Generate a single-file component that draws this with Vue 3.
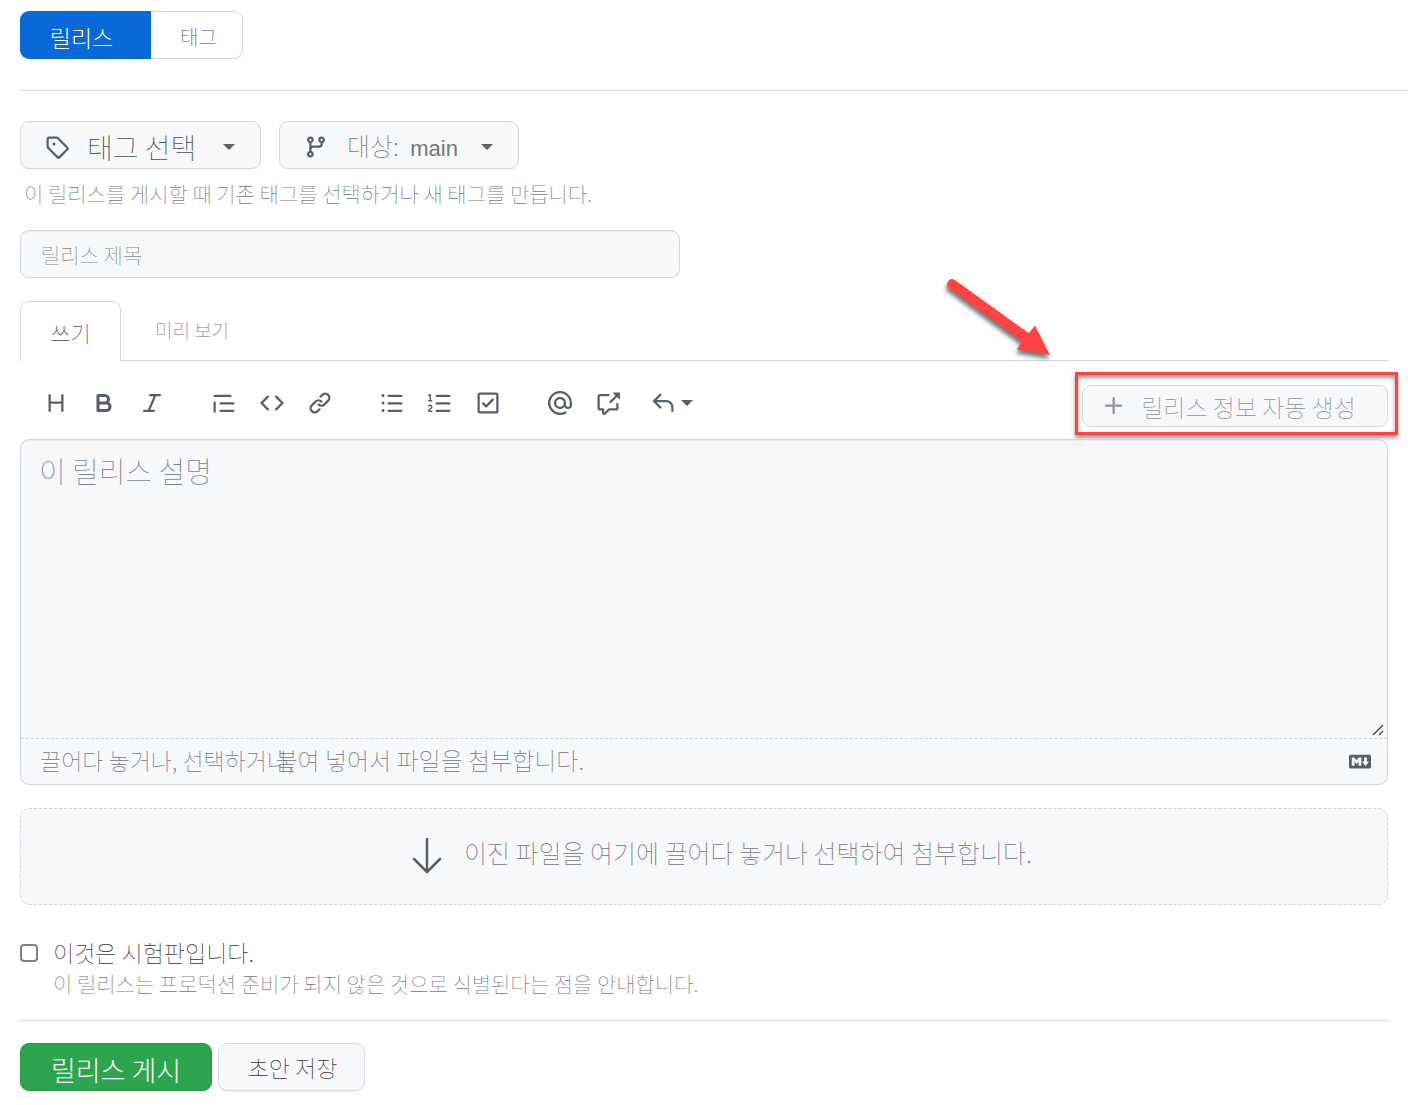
<script setup>
import { ref } from 'vue'

const title = ref('')
const notes = ref('')
const prerelease = ref(false)

const icons = {
  tag: 'M1 7.775V2.75C1 1.784 1.784 1 2.75 1h5.025c.464 0 .91.184 1.238.513l6.25 6.25a1.75 1.75 0 0 1 0 2.474l-5.026 5.026a1.75 1.75 0 0 1-2.474 0l-6.25-6.25A1.752 1.752 0 0 1 1 7.775Zm1.5 0c0 .066.026.13.073.177l6.25 6.25a.25.25 0 0 0 .354 0l5.025-5.025a.25.25 0 0 0 0-.354l-6.25-6.25a.25.25 0 0 0-.177-.073H2.75a.25.25 0 0 0-.25.25ZM6 5a1 1 0 1 1 0 2 1 1 0 0 1 0-2Z',
  branch: 'M9.5 3.25a2.25 2.25 0 1 1 3 2.122V6A2.5 2.5 0 0 1 10 8.5H6a1 1 0 0 0-1 1v1.128a2.251 2.251 0 1 1-1.5 0V5.372a2.25 2.25 0 1 1 1.5 0v1.836A2.493 2.493 0 0 1 6 7h4a1 1 0 0 0 1-1v-.628A2.25 2.25 0 0 1 9.5 3.25Zm-6 0a.75.75 0 1 0 1.5 0 .75.75 0 0 0-1.5 0Zm8.25-.75a.75.75 0 1 0 0 1.5.75.75 0 0 0 0-1.5ZM4.25 12a.75.75 0 1 0 0 1.5.75.75 0 0 0 0-1.5Z',
  plus: 'M7.75 2a.75.75 0 0 1 .75.75V7h4.25a.75.75 0 0 1 0 1.5H8.5v4.25a.75.75 0 0 1-1.5 0V8.5H2.75a.75.75 0 0 1 0-1.5H7V2.75A.75.75 0 0 1 7.75 2Z',
  reply: 'M6.78 1.97a.75.75 0 0 1 0 1.06L3.81 6h6.44A4.75 4.75 0 0 1 15 10.75v2.5a.75.75 0 0 1-1.5 0v-2.5a3.25 3.25 0 0 0-3.25-3.25H3.81l2.97 2.97a.749.749 0 0 1-.326 1.275.749.749 0 0 1-.734-.215L1.47 7.28a.75.75 0 0 1 0-1.06l4.25-4.25a.75.75 0 0 1 1.06 0Z',
  markdown: 'M14.85 3H1.15C.52 3 0 3.52 0 4.15v7.69C0 12.48.52 13 1.15 13h13.69c.64 0 1.15-.52 1.15-1.15v-7.7C16 3.52 15.48 3 14.85 3zM9 11H7V8L5.5 9.92 4 8v3H2V5h2l1.5 2L7 5h2v6zm2.99.5L9.5 8H11V5h2v3h1.5l-2.51 3.5z'
}

const tools = [
  [
    { name: 'heading', path: 'M3.75 2a.75.75 0 0 1 .75.75V7h7V2.75a.75.75 0 0 1 1.5 0v10.5a.75.75 0 0 1-1.5 0V8.5h-7v4.75a.75.75 0 0 1-1.5 0V2.75A.75.75 0 0 1 3.75 2Z' },
    { name: 'bold', path: 'M4 2h4.5a3.501 3.501 0 0 1 2.852 5.53A3.499 3.499 0 0 1 9.5 14H4a1 1 0 0 1-1-1V3a1 1 0 0 1 1-1Zm1 7v3h4.5a1.5 1.5 0 0 0 0-3Zm3.5-2a1.5 1.5 0 0 0 0-3H5v3Z' },
    { name: 'italic', path: 'M6 2.75A.75.75 0 0 1 6.75 2h6.5a.75.75 0 0 1 0 1.5h-2.505l-3.858 9H9.25a.75.75 0 0 1 0 1.5h-6.5a.75.75 0 0 1 0-1.5h2.505l3.858-9H6.75A.75.75 0 0 1 6 2.75Z' }
  ],
  [
    { name: 'quote', path: 'M1.75 2.5h10.5a.75.75 0 0 1 0 1.5H1.75a.75.75 0 0 1 0-1.5Zm4 5h8.5a.75.75 0 0 1 0 1.5h-8.5a.75.75 0 0 1 0-1.5Zm0 5h8.5a.75.75 0 0 1 0 1.5h-8.5a.75.75 0 0 1 0-1.5ZM2.5 7.75v6a.75.75 0 0 1-1.5 0v-6a.75.75 0 0 1 1.5 0Z' },
    { name: 'code', path: 'm11.28 3.22 4.25 4.25a.75.75 0 0 1 0 1.06l-4.25 4.25a.749.749 0 0 1-1.275-.326.749.749 0 0 1 .215-.734L13.94 8l-3.72-3.72a.749.749 0 0 1 .326-1.275.749.749 0 0 1 .734.215Zm-6.56 0a.751.751 0 0 1 1.042.018.751.751 0 0 1 .018 1.042L2.06 8l3.72 3.72a.749.749 0 0 1-.326 1.275.749.749 0 0 1-.734-.215L.47 8.53a.75.75 0 0 1 0-1.06Z' },
    { name: 'link', path: 'm7.775 3.275 1.25-1.25a3.5 3.5 0 1 1 4.95 4.95l-2.5 2.5a3.5 3.5 0 0 1-4.95 0 .751.751 0 0 1 .018-1.042.751.751 0 0 1 1.042-.018 1.998 1.998 0 0 0 2.83 0l2.5-2.5a2.002 2.002 0 0 0-2.83-2.83l-1.25 1.25a.751.751 0 0 1-1.042-.018.751.751 0 0 1-.018-1.042Zm-4.69 9.64a1.998 1.998 0 0 0 2.83 0l1.25-1.25a.751.751 0 0 1 1.042.018.751.751 0 0 1 .018 1.042l-1.25 1.25a3.5 3.5 0 1 1-4.95-4.95l2.5-2.5a3.5 3.5 0 0 1 4.95 0 .751.751 0 0 1-.018 1.042.751.751 0 0 1-1.042.018 1.998 1.998 0 0 0-2.83 0l-2.5 2.5a1.998 1.998 0 0 0 0 2.83Z' }
  ],
  [
    { name: 'bulleted list', path: 'M5.75 2.5h8.5a.75.75 0 0 1 0 1.5h-8.5a.75.75 0 0 1 0-1.5Zm0 5h8.5a.75.75 0 0 1 0 1.5h-8.5a.75.75 0 0 1 0-1.5Zm0 5h8.5a.75.75 0 0 1 0 1.5h-8.5a.75.75 0 0 1 0-1.5ZM2 14a1 1 0 1 1 0-2 1 1 0 0 1 0 2Zm1-6a1 1 0 1 1-2 0 1 1 0 0 1 2 0ZM2 4a1 1 0 1 1 0-2 1 1 0 0 1 0 2Z' },
    { name: 'numbered list', path: 'M5 3.25a.75.75 0 0 1 .75-.75h8.5a.75.75 0 0 1 0 1.5h-8.5A.75.75 0 0 1 5 3.25Zm0 5a.75.75 0 0 1 .75-.75h8.5a.75.75 0 0 1 0 1.5h-8.5A.75.75 0 0 1 5 8.25Zm0 5a.75.75 0 0 1 .75-.75h8.5a.75.75 0 0 1 0 1.5h-8.5a.75.75 0 0 1-.75-.75ZM.924 10.32a.5.5 0 0 1-.851-.525l.001-.001.001-.002.002-.004.007-.011c.097-.144.215-.273.348-.384.228-.19.588-.392 1.068-.392.468 0 .858.181 1.126.484.259.294.377.673.377 1.038 0 .987-.686 1.495-1.156 1.845l-.047.035c-.303.225-.522.4-.654.597h1.357a.5.5 0 0 1 0 1H.5a.5.5 0 0 1-.5-.5c0-1.005.692-1.52 1.167-1.875l.035-.025c.531-.396.8-.625.8-1.078a.57.57 0 0 0-.128-.376C1.806 10.068 1.695 10 1.5 10a.658.658 0 0 0-.429.163.835.835 0 0 0-.144.153ZM2.003 2.5V6h.503a.5.5 0 0 1 0 1H.5a.5.5 0 0 1 0-1h.503V3.308l-.28.14a.5.5 0 0 1-.446-.895l1.003-.5a.5.5 0 0 1 .723.447Z' },
    { name: 'task list', path: 'M2.5 2.75a.25.25 0 0 1 .25-.25h10.5a.25.25 0 0 1 .25.25v10.5a.25.25 0 0 1-.25.25H2.75a.25.25 0 0 1-.25-.25V2.75ZM2.75 1A1.75 1.75 0 0 0 1 2.75v10.5c0 .966.784 1.75 1.75 1.75h10.5A1.75 1.75 0 0 0 15 13.25V2.75A1.75 1.75 0 0 0 13.25 1H2.75Zm9.03 5.28a.75.75 0 0 0-1.06-1.06L6.75 9.19 5.28 7.72a.75.75 0 0 0-1.06 1.06l2 2a.75.75 0 0 0 1.06 0l4.5-4.5Z' }
  ],
  [
    { name: 'mention', path: 'M4.75 2.37a6.501 6.501 0 0 0 6.5 11.26.75.75 0 0 1 .75 1.298A7.999 7.999 0 0 1 .989 4.148 8 8 0 0 1 16 7.75v1.5a2.75 2.75 0 0 1-5.072 1.475 3.999 3.999 0 0 1-6.65-4.19A4 4 0 0 1 12 8v1.25a1.25 1.25 0 0 0 2.5 0V7.867a6.5 6.5 0 0 0-9.75-5.496ZM10.5 8a2.5 2.5 0 1 0-5 0 2.5 2.5 0 0 0 5 0Z' },
    { name: 'reference', path: 'M2.75 3.5a.25.25 0 0 0-.25.25v7.5c0 .138.112.25.25.25h2a.75.75 0 0 1 .75.75v2.19l2.72-2.72a.749.749 0 0 1 .53-.22h4.5a.25.25 0 0 0 .25-.25v-2.5a.75.75 0 0 1 1.5 0v2.5A1.75 1.75 0 0 1 13.25 13H9.06l-2.573 2.573A1.458 1.458 0 0 1 4 14.543V13H2.75A1.75 1.75 0 0 1 1 11.25v-7.5C1 2.784 1.784 2 2.75 2h5.5a.75.75 0 0 1 0 1.5ZM16 1.25v4.146a.25.25 0 0 1-.427.177L14.03 4.03l-3.75 3.75a.749.749 0 0 1-1.275-.326.749.749 0 0 1 .215-.734l3.75-3.75-1.543-1.543A.25.25 0 0 1 11.604 1h4.146a.25.25 0 0 1 .25.25Z' }
  ]
]
</script>

<template>
  <main class="page">
    <nav class="switch">
      <a href="#releases" class="switch-item active">릴리스</a>
      <a href="#tags" class="switch-item">태그</a>
    </nav>
    <hr class="rule wide">

    <div class="pickers">
      <button type="button" class="btn picker tag-picker">
        <svg class="icon" viewBox="0 0 16 16"><path :d="icons.tag" /></svg>
        <span class="picker-label">태그 선택</span>
        <svg class="caret" viewBox="0 0 12 6"><path d="M0 0h12L6 6z" /></svg>
      </button>
      <button type="button" class="btn picker target-picker">
        <svg class="icon" viewBox="0 0 16 16"><path :d="icons.branch" /></svg>
        <span class="picker-label">대상: <span class="branch">main</span></span>
        <svg class="caret" viewBox="0 0 12 6"><path d="M0 0h12L6 6z" /></svg>
      </button>
    </div>
    <p class="hint">이 릴리스를 게시할 때 기존 태그를 선택하거나 새 태그를 만듭니다.</p>

    <input v-model="title" class="title" type="text" placeholder="릴리스 제목" aria-label="릴리스 제목">

    <div class="tabs" role="tablist">
      <button type="button" role="tab" class="tab selected" aria-selected="true">쓰기</button>
      <button type="button" role="tab" class="tab" aria-selected="false">미리 보기</button>
    </div>

    <div class="toolbar">
      <div class="tools">
        <div v-for="(group, i) in tools" :key="i" class="group">
          <button v-for="tool in group" :key="tool.name" type="button" class="tool" :aria-label="tool.name">
            <svg class="icon" viewBox="0 0 16 16"><path :d="tool.path" /></svg>
          </button>
        </div>
        <button type="button" class="tool reply" aria-label="saved replies">
          <svg class="icon" viewBox="0 0 16 16"><path :d="icons.reply" /></svg>
          <svg class="caret" viewBox="0 0 12 6"><path d="M0 0h12L6 6z" /></svg>
        </button>
      </div>
      <div class="generate-wrap">
        <button type="button" class="btn generate">
          <svg class="icon" viewBox="0 0 16 16"><path :d="icons.plus" /></svg>
          <span>릴리스 정보 자동 생성</span>
        </button>
        <div class="callout"></div>
        <svg class="pointer" viewBox="0 0 120 100" aria-hidden="true">
          <path d="M14.500 9.800 L89 63.300 L95 55.500 L110 85 L77 79.500 L82 71.500 L8.900 18 A5 5 0 0 1 14.500 9.800Z" />
        </svg>
      </div>
    </div>

    <div class="editor">
      <textarea v-model="notes" class="notes" placeholder="이 릴리스 설명" aria-label="이 릴리스 설명"></textarea>
      <svg class="grip" viewBox="0 0 12 12" aria-hidden="true"><path d="M1 11 11 1M7 11l4-4" /></svg>
      <div class="attach">
        <p class="attach-text"><span>끌어다 놓거나, 선택하거나,</span><span class="paste">붙여 넣어서 파일을 첨부합니다.</span></p>
        <svg class="markdown" viewBox="0 3 16 10"><path :d="icons.markdown" /></svg>
      </div>
    </div>

    <div class="drop">
      <svg class="arrow-down" viewBox="0 0 30 36"><path d="M15 1v33M2 21l13 13 13-13" /></svg>
      <span class="drop-text">이진 파일을 여기에 끌어다 놓거나 선택하여 첨부합니다.</span>
    </div>

    <div class="prerelease">
      <input id="prerelease" v-model="prerelease" class="check" type="checkbox">
      <div>
        <label for="prerelease" class="check-label">이것은 시험판입니다.</label>
        <p class="check-note">이 릴리스는 프로덕션 준비가 되지 않은 것으로 식별된다는 점을 안내합니다.</p>
      </div>
    </div>

    <hr class="rule">

    <div class="actions">
      <button type="button" class="btn publish">릴리스 게시</button>
      <button type="button" class="btn draft">초안 저장</button>
    </div>
  </main>
</template>

<style>
body {
  background: #fff;
}
</style>

<style scoped>
.page,
.page * {
  box-sizing: border-box;
}

.page {
  padding: 11px 20px 14px;
  font-family: "Noto Sans CJK KR", sans-serif;
  font-weight: 100;
  color: #57606a;
}

button,
input,
textarea {
  margin: 0;
  font-family: inherit;
  font-weight: inherit;
}

button {
  cursor: pointer;
  white-space: nowrap;
}

p {
  margin: 0;
}

.icon {
  flex: none;
  width: 24px;
  height: 24px;
  fill: currentColor;
}

.caret {
  flex: none;
  width: 12px;
  height: 6px;
  fill: currentColor;
}

.switch {
  display: flex;
}

.switch-item {
  display: flex;
  align-items: center;
  justify-content: center;
  width: 92px;
  height: 48px;
  padding: 2px 0 0 4px;
  border: 1px solid #d0d7de;
  border-left: 0;
  border-radius: 0 9px 9px 0;
  color: #4b4b55;
  font-size: 20px;
  text-decoration: none;
}

.switch-item.active {
  width: 131px;
  padding: 4px 8px 0 0;
  border: 0;
  border-radius: 9px 0 0 9px;
  background: #0969da;
  color: #fff;
  font-size: 23px;
  font-weight: 300;
}

.rule {
  height: 1px;
  margin: 0;
  border: 0;
  background: #d8dee4;
}

.rule.wide {
  margin: 31px -20px 30px 0;
}

.btn {
  display: flex;
  align-items: center;
  justify-content: center;
  height: 48px;
  padding: 0;
  border: 1px solid #d5d9dd;
  border-radius: 9px;
  background: #f6f8fa;
  box-shadow: 0 1px 1px #1b1f2408;
  color: #57606a;
}

.pickers {
  display: flex;
  gap: 18px;
}

.picker {
  justify-content: flex-start;
  width: 241px;
  padding: 4px 25px 0 24px;
}

.target-picker {
  width: 240px;
}

.picker-label {
  flex: 1;
  padding-left: 18px;
  color: #4b4b55;
  font-size: 28px;
  line-height: 40px;
  text-align: left;
}

.target-picker .picker-label {
  padding-left: 19px;
  color: #74777d;
  font-size: 25px;
}

.branch {
  margin-left: 6px;
  font-family: "Liberation Sans", sans-serif;
  font-size: 22px;
  font-weight: 400;
}

.hint {
  padding-left: 4px;
  margin: 8px 0 21px;
  color: #777484;
  font-size: 21px;
  line-height: 32px;
}

.title {
  display: block;
  width: 660px;
  max-width: 100%;
  height: 48px;
  padding: 0 20px;
  border: 1px solid #d0d7de;
  border-radius: 9px;
  outline: 0;
  background: #f6f8fa;
  box-shadow: inset 0 1px 1px #d0d7de50;
  color: #57606a;
  font-size: 21px;
}

.title::placeholder,
.notes::placeholder {
  color: #7d8690;
  opacity: 1;
}

.tabs {
  display: flex;
  height: 60px;
  margin-top: 23px;
  box-shadow: inset 0 -1px #d0d7de;
}

.tab {
  padding: 0 34px 4px;
  border: 0;
  background: none;
  color: #777484;
  font-size: 19px;
}

.tab.selected {
  width: 101px;
  padding: 0;
  border: 1px solid #d0d7de;
  border-bottom: 0;
  border-radius: 9px 9px 0 0;
  background: #fff;
  color: #4b4b55;
  font-size: 22px;
}

.toolbar {
  display: flex;
  align-items: flex-start;
  justify-content: space-between;
  padding: 24px 0 12px;
}

.tools {
  display: flex;
  gap: 48px;
  padding: 6px 24px;
}

.group {
  display: flex;
  gap: 24px;
}

.tool {
  display: flex;
  align-items: center;
  padding: 0;
  border: 0;
  background: none;
  color: #57606a;
}

.tool.reply {
  gap: 6px;
  margin-left: -17px;
}

.generate-wrap {
  position: relative;
}

.generate {
  gap: 15px;
  width: 306px;
  height: 42px;
  padding-right: 12px;
  box-shadow: none;
  color: #8c90a0;
  font-size: 24px;
}

.generate .icon {
  color: #8c959f;
}

.callout {
  position: absolute;
  inset: -13px -10px -8px -7px;
  border: 3px solid #ff4343;
  box-shadow: 0 3px 4px #0006, inset 0 3px 4px #0006;
  pointer-events: none;
}

.pointer {
  position: absolute;
  top: -115px;
  left: -142px;
  width: 120px;
  height: 100px;
  overflow: visible;
  fill: #ff4343;
  filter: drop-shadow(-1px 4px 2px #0008);
  pointer-events: none;
}

.editor {
  position: relative;
  border: 1px solid #d0d7de;
  border-radius: 9px;
  background: #f6f8fa;
  box-shadow: inset 0 1px 1px #d0d7de50;
}

.notes {
  display: block;
  width: 100%;
  height: 298px;
  padding: 10px 18px;
  border: 0;
  outline: 0;
  resize: none;
  background: none;
  color: #57606a;
  font-size: 29px;
  line-height: 40px;
}

.grip {
  position: absolute;
  right: 3px;
  bottom: 48px;
  width: 12px;
  height: 12px;
  fill: none;
  stroke: #4b4b4b;
  stroke-width: 1.5;
}

.attach {
  display: flex;
  align-items: center;
  justify-content: space-between;
  height: 46px;
  padding: 0 16px 0 19px;
  border-top: 1px dashed #d0d7de;
}

.attach-text {
  padding-bottom: 3px;
  color: #777484;
  font-size: 23px;
  line-height: 34px;
}

.paste {
  margin-left: -18px;
  font-size: 24px;
}

.markdown {
  width: 22px;
  height: 15px;
  fill: #57606a;
}

.drop {
  display: flex;
  align-items: center;
  justify-content: center;
  gap: 22px;
  height: 97px;
  margin-top: 23px;
  padding: 0 0 2px 36px;
  border: 1px dashed #d0d7de;
  border-radius: 9px;
  background: #f6f8fa;
  color: #777484;
  font-size: 25px;
}

.drop-text {
  padding-bottom: 8px;
}

.arrow-down {
  flex: none;
  width: 30px;
  height: 36px;
  fill: none;
  stroke: #57606a;
  stroke-width: 2.5;
  stroke-linecap: round;
  stroke-linejoin: round;
}

.prerelease {
  display: flex;
  gap: 15px;
  margin: 32px 0 22px;
}

.check {
  appearance: none;
  flex: none;
  width: 18px;
  height: 18px;
  margin-top: 7px;
  border: 2px solid #808080;
  border-radius: 4px;
  background: #fff;
}

.check:checked {
  background: #0969da;
}

.check-label {
  display: block;
  color: #33333d;
  font-size: 23px;
  line-height: 31px;
}

.check-note {
  color: #777484;
  font-size: 21px;
  line-height: 30px;
}

.actions {
  display: flex;
  gap: 6px;
  margin-top: 22px;
}

.publish {
  width: 192px;
  padding-top: 4px;
  border-color: #2a964a;
  background: #2da44e;
  color: #fff;
  font-size: 27px;
  font-weight: 300;
}

.draft {
  width: 147px;
  padding-left: 2px;
  color: #33333d;
  font-size: 23px;
}
</style>
